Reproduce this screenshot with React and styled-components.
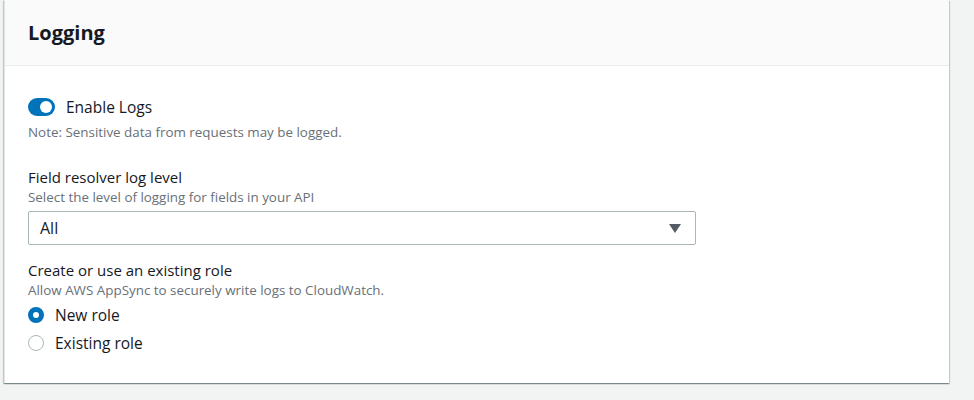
import React, { useState } from 'react';
import styled, { createGlobalStyle } from 'styled-components';

const GlobalStyle = createGlobalStyle`
  body {
    margin: 0;
    background: #f2f3f3;
    font-family: "Open Sans", "Noto Sans", sans-serif;
    color: #16191f;
  }
`;

const Page = styled.div`
  padding: 0 25px 0 4px;
  height: 400px;
  box-sizing: border-box;
`;

const Card = styled.section`
  background: #fff;
  border-left: 1px solid #e1e4e4;
  box-shadow: 0 1px 1px 0 rgba(0, 28, 36, 0.3), 1px 1px 1px 0 rgba(0, 28, 36, 0.15),
    -1px 1px 1px 0 rgba(0, 28, 36, 0.15);
`;

const Header = styled.header`
  background: #fafafa;
  border-bottom: 1px solid #eaeded;
  height: 66px;
  box-sizing: border-box;
  padding: 20px 23px;
`;

const Title = styled.h2`
  margin: 0;
  font-size: 20px;
  line-height: 25px;
  font-weight: 700;
`;

const Body = styled.div`
  padding: 31px 23px 30px;
`;

const ToggleRow = styled.label`
  display: flex;
  align-items: center;
  gap: 11px;
  font-size: 15.5px;
  line-height: 20px;
  cursor: pointer;
`;

const Track = styled.span`
  position: relative;
  width: 27px;
  height: 18px;
  border-radius: 9px;
  background: ${({ $on }) => ($on ? '#0073bb' : '#aab7b8')};
`;

const Knob = styled.span`
  position: absolute;
  top: 3px;
  left: ${({ $on }) => ($on ? '12px' : '3px')};
  width: 12px;
  height: 12px;
  border-radius: 50%;
  background: #fff;
`;

const Hint = styled.div`
  color: #687078;
  font-size: 13.4px;
  line-height: 20px;
  margin-top: ${({ $gap }) => $gap || 0}px;
`;

const Field = styled.div`
  margin-top: ${({ $top }) => $top}px;
`;

const Label = styled.div`
  font-size: 15px;
  line-height: 20px;
`;

const SelectBox = styled.div`
  margin-top: 4px;
  width: 668px;
  height: 34px;
  box-sizing: border-box;
  border: 1px solid #aab7b8;
  border-radius: 2px;
  display: flex;
  align-items: center;
  justify-content: space-between;
  padding: 0 14px 0 11px;
  font-size: 16px;
`;

const Arrow = styled.span`
  width: 0;
  height: 0;
  border-left: 6px solid transparent;
  border-right: 6px solid transparent;
  border-top: 9px solid #545b64;
`;

const Radios = styled.div`
  display: flex;
  flex-direction: column;
  gap: 8px;
  margin-top: 5px;
`;

const RadioRow = styled.label`
  display: flex;
  align-items: center;
  gap: 11px;
  font-size: 15.5px;
  line-height: 20px;
  cursor: pointer;
`;

const Dot = styled.span`
  width: 16px;
  height: 16px;
  box-sizing: border-box;
  border-radius: 50%;
  border: ${({ $checked }) => ($checked ? '5px solid #0073bb' : '1px solid #aab7b8')};
  background: #fff;
`;

const App = () => {
  const [logs, setLogs] = useState(true);
  const [role, setRole] = useState('new');

  return (
    <Page>
      <GlobalStyle />
      <Card>
        <Header>
          <Title>Logging</Title>
        </Header>
        <Body>
          <ToggleRow onClick={() => setLogs(!logs)}>
            <Track $on={logs}>
              <Knob $on={logs} />
            </Track>
            Enable Logs
          </ToggleRow>
          <Hint $gap={5}>Note: Sensitive data from requests may be logged.</Hint>

          <Field $top={25}>
            <Label>Field resolver log level</Label>
            <Hint>Select the level of logging for fields in your API</Hint>
            <SelectBox>
              <span>All</span>
              <Arrow />
            </SelectBox>
          </Field>

          <Field $top={15}>
            <Label>Create or use an existing role</Label>
            <Hint>Allow AWS AppSync to securely write logs to CloudWatch.</Hint>
            <Radios>
              <RadioRow onClick={() => setRole('new')}>
                <Dot $checked={role === 'new'} />
                New role
              </RadioRow>
              <RadioRow onClick={() => setRole('existing')}>
                <Dot $checked={role === 'existing'} />
                Existing role
              </RadioRow>
            </Radios>
          </Field>
        </Body>
      </Card>
    </Page>
  );
};

export default App;
